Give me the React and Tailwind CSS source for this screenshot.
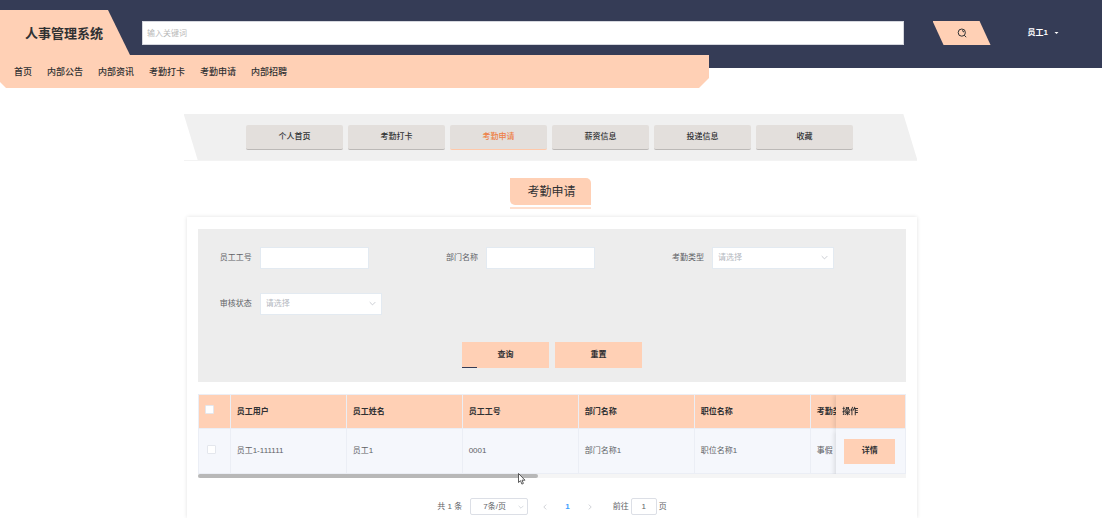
import { useState } from "react";
import clsx from "clsx";

const NAV = ["首页", "内部公告", "内部资讯", "考勤打卡", "考勤申请", "内部招聘"];
const TABS = ["个人首页", "考勤打卡", "考勤申请", "薪资信息", "投递信息", "收藏"];
const COLUMNS = ["员工用户", "员工姓名", "员工工号", "部门名称", "职位名称", "考勤类型"];
const ROWS = [["员工1-111111", "员工1", "0001", "部门名称1", "职位名称1", "事假"]];

function Chevron({ className, d = "M1 3l4 4 4-4" }) {
  return (
    <svg viewBox="0 0 10 10" className={className} fill="none" stroke="currentColor" strokeWidth="1">
      <path d={d} />
    </svg>
  );
}

function TextField({ id, label }) {
  return (
    <div className="flex items-center">
      <label htmlFor={id} className="w-10 text-[#606266]">{label}</label>
      <input id={id} className="h-[22px] w-[109px] border border-[#e3eaf1] bg-white px-1 outline-none" />
    </div>
  );
}

function SelectField({ id, label }) {
  return (
    <div className="flex items-center">
      <label htmlFor={id} className="w-10 text-[#606266]">{label}</label>
      <div className="relative">
        <select
          id={id}
          className="block h-[22px] w-[122px] appearance-none border border-[#e3eaf1] bg-white px-[5px] text-[#b4b8c0] outline-none"
        >
          <option>请选择</option>
        </select>
        <Chevron className="pointer-events-none absolute top-[7px] right-[6px] size-[7px] text-[#b4b8c0]" />
      </div>
    </div>
  );
}

function Header() {
  return (
    <header>
      <div className="flex bg-[#353c56] pt-[10px] pb-[13px]">
        <a
          href="#"
          className="flex h-[45px] w-[130px] items-center bg-[#ffd0b5] pt-[3px] pl-[25px] text-[13px] font-bold text-[#303133] [clip-path:polygon(0_0,108px_0,100%_100%,0_100%)]"
        >
          人事管理系统
        </a>
        <form className="mt-[11px] ml-3 flex h-6 flex-1 items-center" onSubmit={(e) => e.preventDefault()}>
          <input
            aria-label="输入关键词"
            placeholder="输入关键词"
            className="h-6 min-w-0 flex-1 border border-[#d5d7de] bg-white px-1 outline-none placeholder:text-[#b8b8b8]"
          />
          <button
            aria-label="搜索"
            className="ml-[29px] flex h-6 w-[58px] items-center justify-center bg-[#ffd0b5] text-[#303133] [clip-path:polygon(0_0,47px_0,100%_100%,11px_100%)]"
          >
            <svg viewBox="0 0 10 10" className="size-[10px]" fill="none" stroke="currentColor" strokeWidth="1">
              <circle cx="4.8" cy="4.6" r="3.6" />
              <path d="M5 2.6a2 2 0 0 1 1.8 1.8M7.2 7.2L9.2 9.2" />
            </svg>
          </button>
        </form>
        <button className="mt-[11px] mr-[43px] ml-[37px] flex h-6 items-center gap-[6px] font-bold text-white">
          员工1
          <svg viewBox="0 0 4 2" className="h-[2px] w-[5px]" fill="currentColor">
            <path d="M0 0h4L2 2z" />
          </svg>
        </button>
      </div>
      <nav className="relative -mt-[13px] flex h-[33px] w-[709px] items-center gap-[15px] bg-[#ffd0b5] pl-[14px] text-[9px] font-medium text-[#303133] [clip-path:polygon(0_0,100%_0,100%_23px,calc(100%-10px)_100%,6px_100%,0_27px)]">
        {NAV.map((item) => (
          <a key={item} href="#">{item}</a>
        ))}
      </nav>
    </header>
  );
}

function Tabs() {
  const [active, setActive] = useState("考勤申请");
  return (
    <div className="border-b border-[#f3f3f3]">
      <div className="flex h-[46px] items-center justify-center gap-[5px] bg-[#f0f0f0] pr-[2px] [clip-path:polygon(0_0,calc(100%-14px)_0,100%_100%,14px_100%)]">
        {TABS.map((tab) => (
          <button
            key={tab}
            onClick={() => setActive(tab)}
            className={clsx(
              "h-[25px] w-[97px] rounded-[2px] border-b bg-[#e3dfdc] font-medium",
              tab === active ? "border-[#ffc8a9] text-[#ee7f47]" : "border-[#bcb9b7] text-[#303133]"
            )}
          >
            {tab}
          </button>
        ))}
      </div>
    </div>
  );
}

function SearchForm() {
  return (
    <form className="bg-[#ededed] pt-[18px] pb-[14px]" onSubmit={(e) => e.preventDefault()}>
      <div className="grid grid-cols-3 gap-y-6 pr-2 pl-[22px]">
        <TextField id="jobNo" label="员工工号" />
        <TextField id="dept" label="部门名称" />
        <SelectField id="type" label="考勤类型" />
        <SelectField id="status" label="审核状态" />
      </div>
      <div className="mt-[27px] flex justify-center gap-[6px]">
        <button className="relative h-[26px] w-[87px] bg-[#ffd0b5] font-bold text-[#303133]">
          查询
          <span className="absolute bottom-0 left-0 h-px w-[15px] bg-[#353c56]" />
        </button>
        <button type="reset" className="h-[26px] w-[87px] bg-[#ffd0b5] font-bold text-[#303133]">
          重置
        </button>
      </div>
    </form>
  );
}

function Checkbox({ label }) {
  return (
    <input
      type="checkbox"
      aria-label={label}
      className="block size-[9px] appearance-none rounded-[1px] border border-[#e4e7ed] bg-white checked:bg-[#409eff]"
    />
  );
}

function RecordTable() {
  return (
    <div className="mt-3">
      <div className="overflow-hidden border-t border-l border-[#ebeef5]">
        <table className="w-[798px] table-fixed border-separate border-spacing-0 text-left">
          <thead>
            <tr className="h-[34px] text-[#303133]">
              <th className="w-8 border-r border-b border-[#ebeef5] bg-[#ffd0b5] pb-1 pl-[6px]">
                <Checkbox label="全选" />
              </th>
              {COLUMNS.map((col) => (
                <th key={col} className="w-[116px] border-r border-b border-[#ebeef5] bg-[#ffd0b5] px-[6px]">
                  {col}
                </th>
              ))}
              <th className="sticky right-0 w-[70px] border-r border-b border-[#ebeef5] bg-[#ffd0b5] px-[6px] shadow-[-2px_0_4px_rgba(0,0,0,0.1)]">
                操作
              </th>
            </tr>
          </thead>
          <tbody>
            {ROWS.map((row) => (
              <tr key={row[0]} className="h-[45px] text-[#606266]">
                <td className="border-r border-b border-[#ebeef5] bg-[#f5f7fc] pb-1 pl-2">
                  <Checkbox label={row[0]} />
                </td>
                {row.map((cell, i) => (
                  <td key={COLUMNS[i]} className="border-r border-b border-[#ebeef5] bg-[#f5f7fc] px-[6px]">
                    {cell}
                  </td>
                ))}
                <td className="sticky right-0 border-r border-b border-[#ebeef5] bg-[#f5f7fc] px-2 shadow-[-2px_2px_4px_rgba(0,0,0,0.1)]">
                  <button className="block h-[25px] w-[51px] bg-[#ffd0b5] font-bold text-[#303133]">详情</button>
                </td>
              </tr>
            ))}
          </tbody>
        </table>
      </div>
      <div className="h-1 bg-[#f5f5f5]">
        <div className="h-1 w-[48%] rounded-full bg-[#b8b8b8]" />
      </div>
    </div>
  );
}

function Pagination() {
  return (
    <div className="mt-5 flex h-[17px] items-center justify-center text-[#606266]">
      <span>共 1 条</span>
      <div className="relative ml-2">
        <select
          aria-label="每页条数"
          className="block h-[17px] w-[58px] appearance-none rounded-[2px] border border-[#dcdfe6] bg-white pl-3 outline-none"
        >
          <option>7条/页</option>
        </select>
        <Chevron className="pointer-events-none absolute top-[6px] right-1 size-[6px] text-[#c0c4cc]" />
      </div>
      <button aria-label="上一页" className="ml-[14px]">
        <Chevron d="M7 1L3 5l4 4" className="size-[6px] text-[#b0b4bc]" />
      </button>
      <button className="mx-[17px] font-bold text-[#409eff]">1</button>
      <button aria-label="下一页">
        <Chevron d="M3 1l4 4-4 4" className="size-[6px] text-[#b0b4bc]" />
      </button>
      <label htmlFor="page" className="mr-[2px] ml-5">前往</label>
      <input
        id="page"
        defaultValue="1"
        className="h-[17px] w-[26px] rounded-[2px] border border-[#dcdfe6] bg-white text-center outline-none"
      />
      <span className="ml-[2px]">页</span>
    </div>
  );
}

export default function App() {
  return (
    <div className="relative flex min-h-screen flex-col bg-white font-['Liberation_Sans','Noto_Sans_CJK_SC',sans-serif] text-[8px] leading-3">
      <Header />
      <main className="mx-auto mt-[26px] flex w-2/3 flex-1 flex-col pr-px">
        <Tabs />
        <div className="mt-[17px] mb-2 self-center border-b-2 border-[#ffdfcd] pb-[2px]">
          <h1 className="flex h-[27px] w-[81px] items-center justify-center rounded-tr-[5px] rounded-bl-[5px] bg-[#ffd0b5] pl-[2px] text-[12px] text-[#303133]">
            考勤申请
          </h1>
        </div>
        <section className="ml-[3px] flex-1 px-[11px] pt-3 shadow-[0_0_4px_rgba(0,0,0,0.12)]">
          <SearchForm />
          <RecordTable />
          <Pagination />
        </section>
      </main>
      {/* mouse pointer */}
      <svg viewBox="0 0 8 12" className="pointer-events-none absolute top-[473px] left-[518px] h-3 w-2">
        <path d="M.5.5v9l2-1.8 1.4 3.4 1.5-.7L4 7.2h3z" fill="#fff" stroke="#333" strokeWidth=".8" />
      </svg>
    </div>
  );
}
